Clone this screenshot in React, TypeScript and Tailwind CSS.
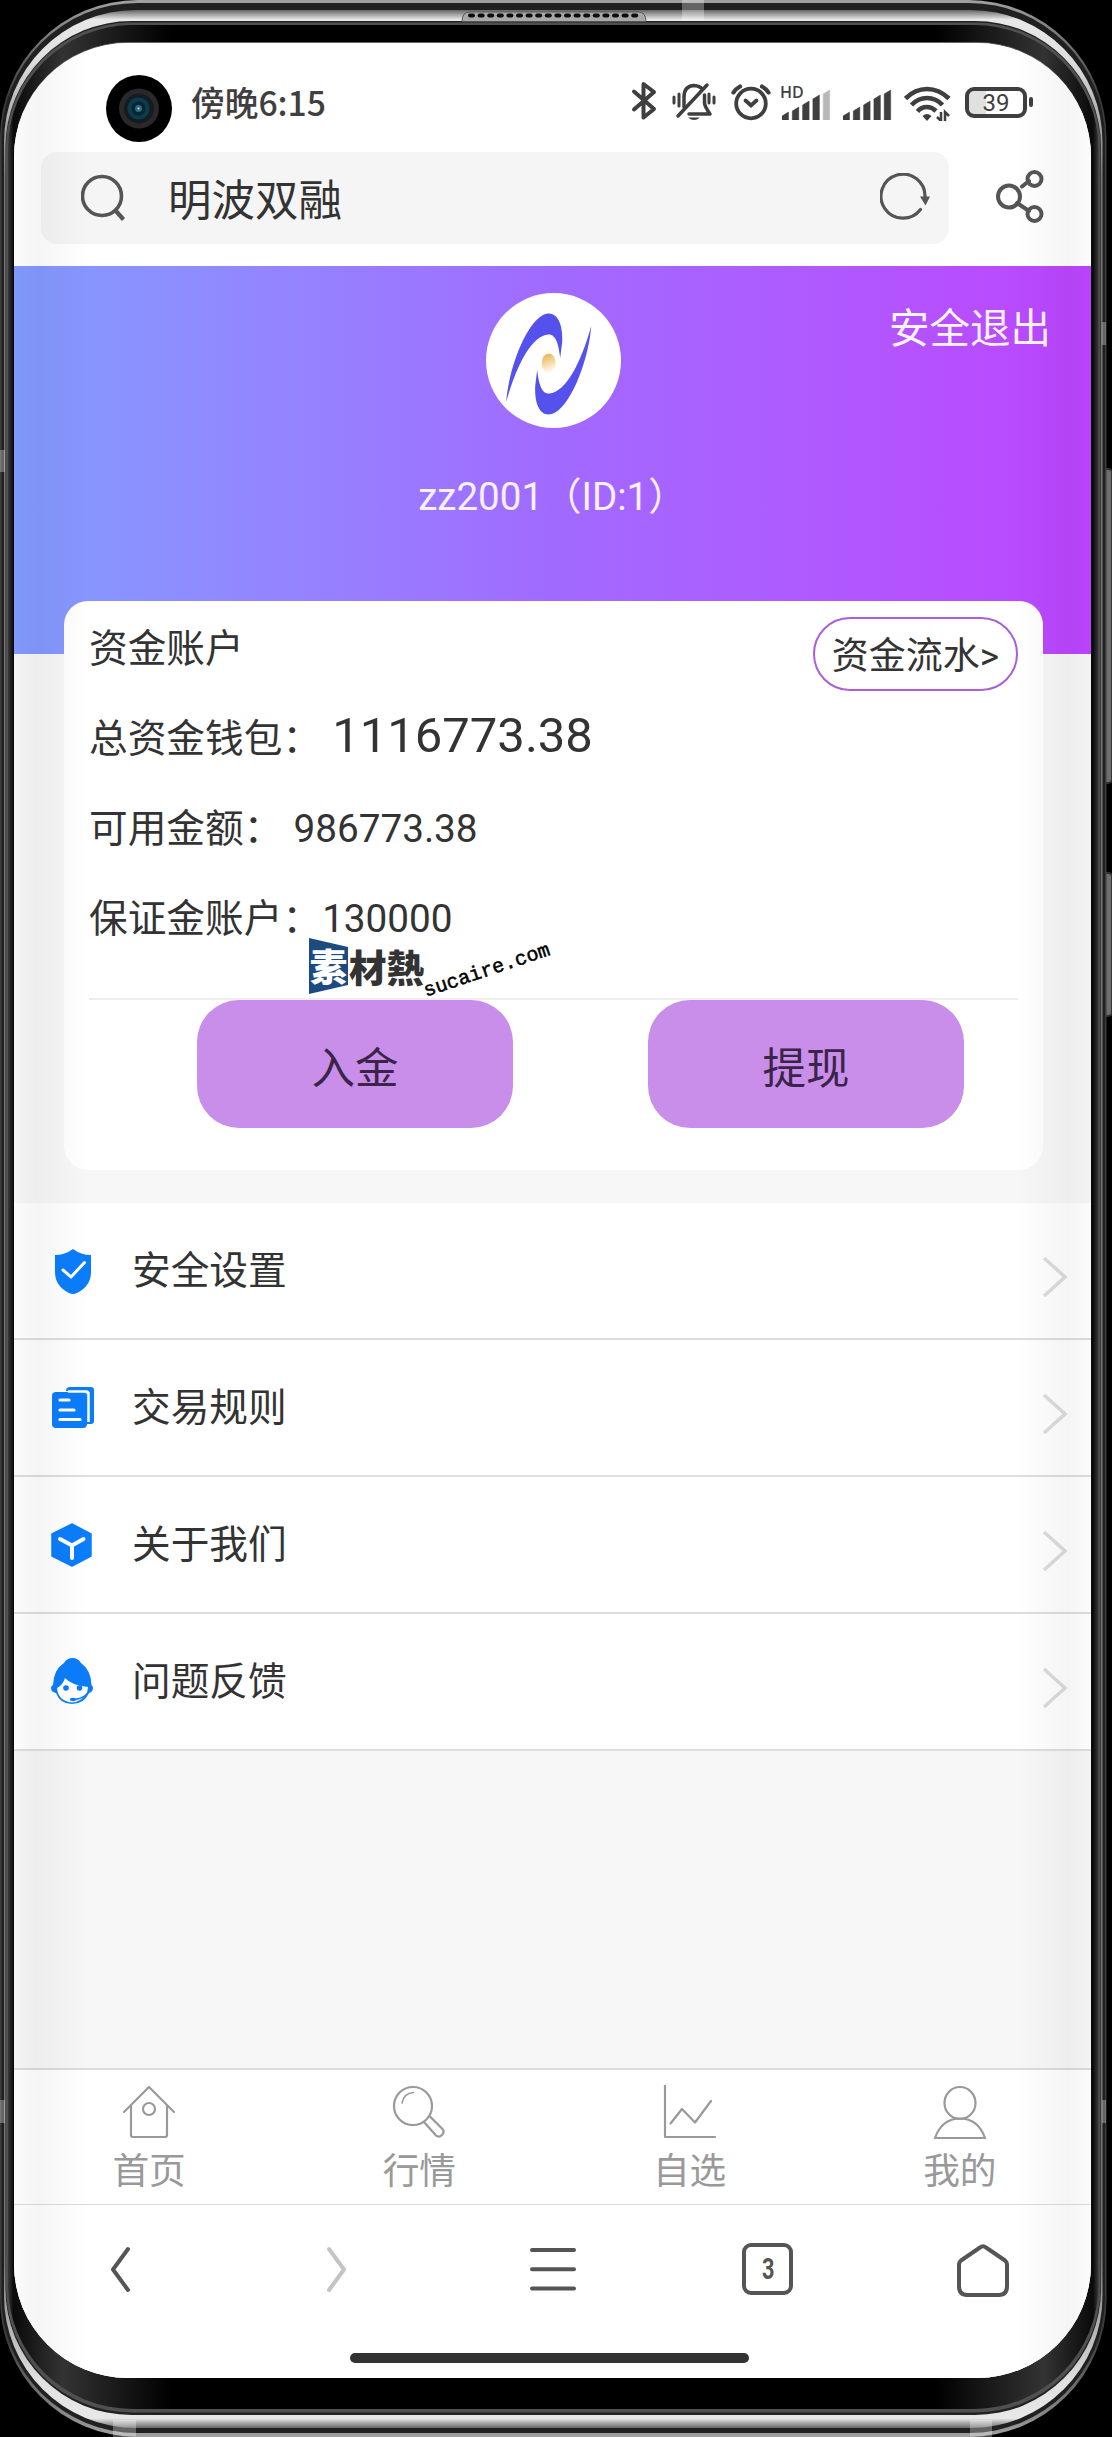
import type { ReactNode } from "react";
import clsx from "clsx";

const BLUE = "#0b7dfb";

interface MenuItem {
  label: string;
  icon: ReactNode;
}

function ShieldIcon() {
  return (
    <svg width="46" height="46" viewBox="0 0 46 46" fill="none">
      <path d="M23 1 Q31 7 41 7 V24 Q41 38 27 45 Q23 47 19 45 Q5 38 5 24 V7 Q15 7 23 1 Z" fill={BLUE} />
      <path d="M13 22 L21 29 L34.500 14.500" stroke="#fff" strokeWidth="3" strokeLinecap="round" />
    </svg>
  );
}

function RulesIcon() {
  return (
    <svg width="46" height="46" viewBox="0 0 46 46" fill="none">
      <path d="M20 2 H41 Q44 2 44 5 V36 Q44 39 41 39 H37 V8 Q37 6 35 6 H16 Q16 2 20 2 Z" fill={BLUE} />
      <rect x="2" y="7" width="35" height="36" rx="4" fill={BLUE} />
      <path d="M38.500 37 V9 Q38.500 6.500 36 6.500 H18" stroke="#fff" strokeWidth="2.500" />
      <path d="M10 15 H19 M10 25 H24 M10 34.500 H30" stroke="#fff" strokeWidth="3.200" strokeLinecap="round" />
    </svg>
  );
}

function CubeIcon() {
  return (
    <svg width="46" height="46" viewBox="0 0 46 46" fill="none">
      <path d="M22 2 L41 12 V34 L22 44 L2 34 V12 Z" fill={BLUE} stroke={BLUE} strokeWidth="1.500" strokeLinejoin="round" />
      <path d="M10 17 L22 23.500 L33.500 17 M22 23.500 V36" stroke="#fff" strokeWidth="4" strokeLinecap="round" />
    </svg>
  );
}

function ServiceIcon() {
  return (
    <svg width="46" height="50" viewBox="0 0 46 50" fill="none">
      <path d="M14 6 Q17 1 22.500 1 Q28 1 31 6 Q41 13 41.500 28 Q43 29 43 31 Q43 35 39 36 Q34 47 22 47 Q10 47 6 36 Q1 35 1 31 Q1 29 3 28 Q4 12 14 6 Z" fill={BLUE} />
      <path d="M7 31 Q13 28 15 21 Q21 28 38 30 Q38 35 35 39 Q29 45 22 45.500 Q8 44 7 31 Z" fill="#fff" />
      <circle cx="16" cy="31" r="2.800" fill={BLUE} />
      <circle cx="29.500" cy="31" r="2.800" fill={BLUE} />
      <path d="M38 36 Q33 42 23 42.500" stroke={BLUE} strokeWidth="1.500" />
      <ellipse cx="23" cy="42.500" rx="3" ry="1.700" fill={BLUE} />
    </svg>
  );
}

const menuItems: MenuItem[] = [
  { label: "安全设置", icon: <ShieldIcon /> },
  { label: "交易规则", icon: <RulesIcon /> },
  { label: "关于我们", icon: <CubeIcon /> },
  { label: "问题反馈", icon: <ServiceIcon /> },
];

const tabs: MenuItem[] = [
  {
    label: "首页",
    icon: (
      <>
        <path d="M2 27 L27 2 L52 27" />
        <path d="M9 21 V50 Q9 52 11 52 H43 Q45 52 45 50 V21" />
        <circle cx="27" cy="24" r="6" />
      </>
    ),
  },
  {
    label: "行情",
    icon: (
      <>
        <circle cx="21" cy="21" r="19" />
        <path d="M10 18 Q12 8 21.500 7.500" strokeWidth="1.500" />
        <path d="M32 37 L44 50.500 Q47 53 50 50 Q53 47 50.500 44 L37.500 31" />
      </>
    ),
  },
  {
    label: "自选",
    icon: (
      <>
        <path d="M2 1 V52 H52" />
        <path d="M7.500 38.500 L19 24 L32 37.500 L48 16" />
      </>
    ),
  },
  {
    label: "我的",
    icon: (
      <>
        <ellipse cx="27" cy="18" rx="15.500" ry="16" />
        <path d="M2 53 H52 Q45 33.500 27 33.500 Q9 33.500 2 53 Z" />
      </>
    ),
  },
];

const signalBars = [8, 13, 19, 25, 30];

function Signal({ faded = false }: { faded?: boolean }) {
  return (
    <svg width="49" height="31" viewBox="0 0 49 31">
      {signalBars.map((h, i) => (
        <path
          key={h}
          d={`M${i * 10.3} 31 V${31 - h + 4} L${i * 10.3 + 6.5} ${31 - h} V31 Z`}
          fill={faded && i === 4 ? "#b8b8b8" : "#3f3f3f"}
          stroke={faded && i === 4 ? "#b8b8b8" : "#3f3f3f"}
          strokeWidth="0.5"
        />
      ))}
    </svg>
  );
}

function StatusIcons() {
  return (
    <div className="flex items-end text-[#3f3f3f]">
      <svg className="mr-[15px]" width="26" height="40" viewBox="0 0 26 40" fill="none" stroke="currentColor" strokeWidth="4" strokeLinejoin="round" strokeLinecap="round">
        <path d="M3 10.500 L23 28 L12.500 36.500 V3 L23 11 L3 28.500" />
      </svg>
      <svg className="mr-[15px]" width="44" height="40" viewBox="0 0 44 40" fill="none" stroke="currentColor" strokeWidth="3.500" strokeLinecap="round">
        <path d="M12 26 V16 Q12 5 22 4.500 Q28 5 30 8" />
        <path d="M6 35 L35 4" />
        <path d="M32.500 14 V22 Q33 26 38 33 H17" strokeLinejoin="round" />
        <path d="M16 36.500 H28 Q22 41.500 16 36.500 Z" fill="currentColor" stroke="none" />
        <path d="M2 16 V22 M7 13 V25 M42 16 V22 M37 13 V22" strokeWidth="3" />
      </svg>
      <svg className="mr-[11px]" width="40" height="38" viewBox="0 0 40 38" fill="none" stroke="currentColor" strokeWidth="3.800" strokeLinecap="round">
        <circle cx="20" cy="20.500" r="14.800" />
        <path d="M2.500 9.500 Q4.500 6 9 3.500 M37.500 9.500 Q35.500 6 31 3.500" strokeWidth="4.200" />
        <path d="M14.500 17.500 L20 22.500 L25.500 17.500" />
      </svg>
      <div className="relative mr-[12px] mb-px">
        <Signal faded />
        <span className="absolute -top-[5px] -left-[2px] text-[16px] leading-none font-semibold font-['Open_Sans',sans-serif]">HD</span>
      </div>
      <div className="mr-[12px] mb-px">
        <Signal />
      </div>
      <svg className="mr-[14px]" width="47" height="36" viewBox="0 0 47 36" fill="none" stroke="currentColor" strokeWidth="4.600">
        <path d="M1.500 13.500 Q11 4 23 4 Q35 4 45 13.500" />
        <path d="M7.500 20 Q14 13 23 13 Q32 13 38.500 20" />
        <path d="M13.500 26.500 Q17 22 23 22 Q28 22 32 26" />
        <path d="M18.500 31 Q23 27 27.500 31 L23 36 Z" fill="currentColor" stroke="none" />
        <path d="M37 27 V36 L33 32 M41 36 V27 L45 31" strokeWidth="2.500" />
      </svg>
      <div className="mb-[3px] flex h-[31px] w-[62px] items-center justify-center rounded-[9px] border-4 border-[#3f3f3f] bg-linear-to-r from-[#e0e0e0] from-[32%] to-white to-[32%] text-[24px] leading-none font-['Roboto',sans-serif]">
        39
      </div>
      <div className="mb-[14px] ml-[2px] h-[10px] w-[4px] rounded-sm bg-[#3f3f3f]" />
    </div>
  );
}

function Camera() {
  return (
    <svg width="66" height="67" viewBox="0 0 66 67">
      <ellipse cx="33" cy="33.500" rx="33" ry="33.500" fill="#000" />
      <circle cx="33" cy="33.500" r="20" fill="#2b282b" />
      <circle cx="33" cy="33.500" r="15" fill="#151b20" />
      <circle cx="32.500" cy="33.500" r="11" fill="#0a3c4c" />
      <circle cx="32.500" cy="33.500" r="7" fill="#062531" />
      <circle cx="32.500" cy="33.500" r="3.500" fill="#2b6c80" />
      <circle cx="32.500" cy="33.500" r="1" fill="#bfe3ee" />
    </svg>
  );
}

function AvatarLogo() {
  const swoosh = "M506 402 C508 372 524 326 542 315.500 C554 309 563 319 562 342 L560 358 C558.500 345 556 334 548 334.500 C531 336 516 366 506 402 Z";
  return (
    <svg width="135" height="135" viewBox="485.800 293 135 135">
      <defs>
        <linearGradient id="gold" x1="0" y1="0" x2="0.300" y2="1">
          <stop offset="0.200" stopColor="#e8bd62" />
          <stop offset="1" stopColor="#fff6e6" />
        </linearGradient>
      </defs>
      <path d={swoosh} fill="#5551ec" />
      <path d={swoosh} fill="#5551ec" transform="rotate(180 548.500 364)" />
      <ellipse cx="548.500" cy="363" rx="7" ry="9.500" fill="url(#gold)" />
    </svg>
  );
}

// Metal body around the screen: nested rounded layers, keys and antenna lines
function PhoneFrame() {
  const dots = Array.from({ length: 18 }, (_, i) => 471.5 + i * 9.6);
  return (
    <svg className="absolute inset-0" width="1112" height="2437" viewBox="0 0 1112 2437">
      <defs>
        <linearGradient id="rim" x1="0" y1="0" x2="0" y2="1">
          <stop offset="0" stopColor="#a0a0a0" />
          <stop offset="0.040" stopColor="#3c3c3c" />
          <stop offset="0.960" stopColor="#3c3c3c" />
          <stop offset="1" stopColor="#a0a0a0" />
        </linearGradient>
        <linearGradient id="metal" x1="0" y1="0" x2="0" y2="1">
          <stop offset="0" stopColor="#666" />
          <stop offset="0.004" stopColor="#e8e8e8" />
          <stop offset="0.020" stopColor="#e0e0e0" />
          <stop offset="0.070" stopColor="#777" />
          <stop offset="0.930" stopColor="#777" />
          <stop offset="0.980" stopColor="#e0e0e0" />
          <stop offset="0.996" stopColor="#e8e8e8" />
          <stop offset="1" stopColor="#666" />
        </linearGradient>
        <linearGradient id="side" x1="0" y1="0" x2="1" y2="0">
          <stop offset="0" stopColor="#3a3a3a" />
          <stop offset="0.005" stopColor="#0a0a0a" />
          <stop offset="0.050" stopColor="#333" />
          <stop offset="0.150" stopColor="#000" />
          <stop offset="0.850" stopColor="#000" />
          <stop offset="0.950" stopColor="#333" />
          <stop offset="0.995" stopColor="#0a0a0a" />
          <stop offset="1" stopColor="#3a3a3a" />
        </linearGradient>
      </defs>
      <rect x="1103" y="469" width="9" height="314" rx="4" fill="#6e6e6e" stroke="#333" strokeWidth="2" />
      <rect x="1103" y="873" width="9" height="143" rx="4" fill="#6e6e6e" stroke="#333" strokeWidth="2" />
      <rect x="0" y="0" width="1106.500" height="2437" rx="138" fill="url(#rim)" />
      <rect x="1.500" y="3" width="1103.500" height="2430" rx="136" fill="#202020" />
      <rect x="4" y="10" width="1098.500" height="2418" rx="132" fill="url(#metal)" />
      <rect x="5.500" y="21" width="1095.500" height="2394" rx="126" fill="#222" />
      <rect x="6" y="22.500" width="1094.500" height="2390" rx="125" fill="#505050" />
      <rect x="8" y="25" width="1090.500" height="2384" rx="124" fill="url(#side)" />
      <rect x="14" y="42" width="1077" height="2336" rx="114" fill="#666" />
      <path d="M462 21.500 Q462 12 470 12 H638 Q646 12 646 21.500 Z" fill="#a8a8a8" stroke="#555" />
      {dots.map((x) => (
        <rect key={x} x={x - 3.5} y="13.500" width="7" height="4" rx="2" fill="#0c0c0c" />
      ))}
      <g fill="#fff" fillOpacity="0.300">
        <rect x="682" y="0" width="22" height="21" />
        <rect x="113" y="2420" width="23" height="17" />
        <rect x="970" y="2420" width="22" height="17" />
        <rect x="0" y="450" width="5" height="22" />
        <rect x="0" y="2100" width="5" height="23" />
        <rect x="1102" y="322" width="4" height="23" />
        <rect x="1102" y="2100" width="4" height="23" />
      </g>
    </svg>
  );
}

export default function App() {
  return (
    <div className="relative h-[2437px] w-[1112px] overflow-hidden bg-black font-['Roboto','Noto_Sans_CJK_SC',sans-serif] text-[#333]">
      <PhoneFrame />

      <div className="flex h-full pt-[43px] pl-[14px]">
        <div className="relative flex h-[2335px] w-[1077px] flex-col overflow-hidden rounded-[114px] bg-[#f7f7f7]">
          {/* Status bar */}
          <div className="flex h-[109px] shrink-0 items-start bg-white pl-[92px]">
            <div className="mt-[32px]">
              <Camera />
            </div>
            <div className="mt-[39px] ml-[19px] text-[33.7px] leading-[40px] font-medium text-[#3f3f3f] font-['Noto_Sans_CJK_SC',sans-serif]">
              傍晚6:15
            </div>
            <div className="mt-[38px] mr-[58px] ml-auto">
              <StatusIcons />
            </div>
          </div>

          {/* Address bar */}
          <div className="flex h-[114px] shrink-0 items-start bg-white pl-[27px]">
            <div className="flex h-[92px] w-[908px] items-center rounded-2xl bg-[#f5f5f5] pr-[19px] pl-[40px]">
              <svg width="46" height="50" viewBox="0 0 46 50" fill="none" stroke="#555" strokeWidth="3.600">
                <circle cx="21" cy="23" r="19.500" />
                <path d="M34 37 L42.500 46.500" strokeWidth="4.200" />
              </svg>
              <div className="mt-[7px] ml-[41px] text-[43.5px] leading-[60px]">明波双融</div>
              <svg className="ml-auto" width="50" height="50" viewBox="0 0 50 50" fill="none" stroke="#555" strokeWidth="3.200">
                <path d="M40.500 36.500 A22 22 0 1 1 45 24" strokeLinecap="round" />
                <path d="M40 23.500 H50 L45.500 32.500 Z" fill="#555" stroke="none" />
              </svg>
            </div>
            <svg className="mt-[16px] ml-[47px]" width="50" height="58" viewBox="0 0 50 58" fill="none" stroke="#555" strokeWidth="4">
              <circle cx="13" cy="28.500" r="11" />
              <circle cx="38.500" cy="11" r="7" />
              <circle cx="38.500" cy="46" r="7" />
              <path d="M26 18.500 L33 13 M21 35 L33 43" strokeLinecap="round" />
            </svg>
          </div>

          {/* Profile header */}
          <div className="relative flex h-[388px] shrink-0 flex-col items-center bg-linear-to-r from-[#829bff] via-[#a16aff] via-50% to-[#bc44ff] pt-[27px] pl-[2px]">
            <div className="h-[135px] w-[135px] rounded-full bg-white">
              <AvatarLogo />
            </div>
            <div className="mt-[46px] mr-[2px] text-[38.5px] leading-[46px] text-white/90">zz2001（ID:1）</div>
            <button className="absolute top-[35px] right-[40px] text-[40.5px] leading-[56px] text-white/95">安全退出</button>
          </div>

          {/* Funds card */}
          <section className="relative -mt-[53px] ml-[50px] h-[569px] w-[979px] shrink-0 rounded-3xl bg-white px-[25px] pt-px">
            <div className="flex h-[90px] items-center justify-between text-[38.7px]">
              <span className="mt-[4px]">资金账户</span>
              <button className="mt-[14px] flex h-[74px] w-[205px] items-center justify-center rounded-full border-2 border-[#aa5fd6] pt-[6px] text-[37px]">
                资金流水&gt;
              </button>
            </div>
            <div className="flex h-[91px] items-baseline text-[38.7px] leading-[88px]">
              总资金钱包：<span className="ml-[11px] text-[49px]">1116773.38</span>
            </div>
            <div className="flex h-[90px] items-baseline text-[38.7px] leading-[91px]">
              可用金额：<span className="ml-[11px]">986773.38</span>
            </div>
            <div className="flex h-[90px] items-baseline text-[38.7px] leading-[91px]">
              保证金账户：<span className="ml-px">130000</span>
            </div>
            <div className="mt-[35px] flex h-[130px] justify-between border-t-2 border-[#eee] pr-[54px] pl-[108px]">
              {["入金", "提现"].map((label) => (
                <button key={label} className="h-[128px] w-[316px] rounded-[42px] bg-[#c88eea] pt-[11px] text-[43.5px] text-[#3a2447]">
                  {label}
                </button>
              ))}
            </div>

            {/* Site mark laid over the card */}
            <div className="absolute top-[337px] left-[245px] flex items-center font-['Noto_Sans_CJK_TC',sans-serif] text-[37.5px] leading-[54px] font-black">
              <span className="flex h-[56px] w-[39px] justify-center bg-[#1d4b80] text-white [clip-path:polygon(0_0,100%_16%,100%_84%,0_100%)]">
                素
              </span>
              <span className="ml-px">材熱</span>
            </div>
            <div className="absolute top-[358px] left-[357px] -rotate-[18.6deg] font-['Liberation_Mono',monospace] text-[20px] leading-[24px] text-black [-webkit-text-stroke:0.5px_black]">
              sucaire.com
            </div>
          </section>

          {/* Menu */}
          <ul className="mt-[33px] shrink-0 bg-white">
            {menuItems.map((item) => (
              <li key={item.label} className="flex h-[137px] items-center border-b-2 border-[#dedede] pl-[36px]">
                <div className="w-[82px]">{item.icon}</div>
                <span className="mt-px text-[38.7px]">{item.label}</span>
                <svg className="mt-[12px] mr-[22px] ml-auto" width="28" height="44" viewBox="0 0 28 44" fill="none" stroke="#dcdcdc" strokeWidth="3.500">
                  <path d="M3 3 L24 22 L3 41" />
                </svg>
              </li>
            ))}
          </ul>

          {/* Tab bar */}
          <nav className="mt-auto -mr-[4px] flex h-[137px] shrink-0 border-t-2 border-b border-[#dcdcdc] bg-white">
            {tabs.map((tab) => (
              <div key={tab.label} className="flex flex-1 flex-col items-center pt-[15px] text-[36.7px] text-[#999]">
                <svg width="54" height="54" viewBox="0 0 54 54" fill="none" stroke="#999" strokeWidth="2.200" strokeLinecap="round" strokeLinejoin="round">
                  {tab.icon}
                </svg>
                <span className="mt-[7px] leading-[52px]">{tab.label}</span>
              </div>
            ))}
          </nav>

          {/* Browser toolbar */}
          <div className="flex h-[148px] shrink-0 items-start bg-white pt-[35px]">
            {[
              <path key="back" d="M36 9 L21 29.500 L36 50" />,
              <path key="forward" d="M22 9 L37 29.500 L22 50" stroke="#c4c4c4" />,
              <path key="menu" d="M9 10 H51 M9 29.300 H51 M9 48.500 H51" />,
              null,
              <path key="home" d="M27 7.500 Q30 5 33 7.500 L52 20.500 Q54 22 54 25 V46 Q54 55 46 55 H14 Q6 55 6 46 V25 Q6 22 8 20.500 Z" />,
            ].map((shape, i) => (
              <div key={i} className="flex flex-1 justify-center">
                {shape ? (
                  <svg width="60" height="60" viewBox="0 0 60 60" fill="none" stroke="#555" strokeWidth="4" strokeLinecap="round" strokeLinejoin="round">
                    {shape}
                  </svg>
                ) : (
                  <div className="mt-[3px] flex h-[52px] w-[51px] items-center justify-center rounded-[9px] border-4 border-[#555] text-[29px] leading-none font-bold text-[#555]">
                    <span className="scale-x-75">3</span>
                  </div>
                )}
              </div>
            ))}
          </div>
          <div className="flex h-[25px] shrink-0 bg-white pl-[336px]">
            <div className="h-[10px] w-[399px] rounded-full bg-[#333]" />
          </div>

          {/* Curved glass shading on both edges */}
          {["left", "right"].map((side) => (
            <div
              key={side}
              className={clsx(
                "pointer-events-none absolute inset-y-0 w-[76px] from-black/[0.015] via-black/[0.04] via-30% to-transparent",
                side === "left" ? "left-0 bg-linear-to-r" : "right-0 bg-linear-to-l"
              )}
            />
          ))}
        </div>
      </div>
    </div>
  );
}
